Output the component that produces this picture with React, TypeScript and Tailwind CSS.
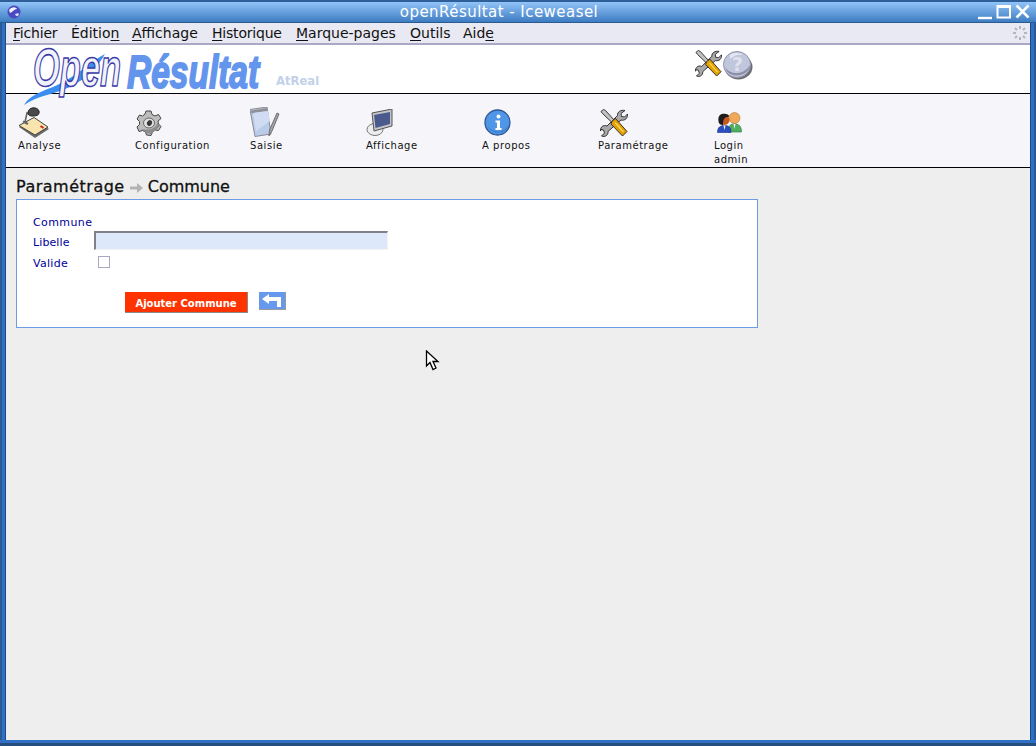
import type { ReactNode } from 'react';

function ToolsIcon({ size = 28 }: { size?: number }) {
  return (
    <svg width={size} height={size} viewBox="0 0 28 28">
      {/* wrench */}
      <path
        d="M25 1.5 L21 4.5 L21.5 7.5 L24.5 8 L27.5 5 C28 9 25 12 21 11 L8 22.5 C8.5 26 5 28.5 1.5 27 L4.5 24 L3.5 21 L1 20.5 L0.5 22 C0 18 3.5 15.5 7 17 L17.5 6.5 C17 3 21 0.5 25 1.5 Z"
        fill="#a9a9a9"
        stroke="#222"
        strokeWidth="0.9"
      />
      {/* screwdriver shaft */}
      <path d="M1 2.5 L3.5 0.5 L5.5 1.5 L15 12 L12.5 14 L2.5 4.5 Z" fill="#c2c2c2" stroke="#222" strokeWidth="0.9" />
      {/* handle */}
      <path d="M12 12 L15.5 9.5 L27 22.5 L22.5 27 L11 15 Z" fill="#e3a000" stroke="#222" strokeWidth="0.9" />
      <path d="M15 13.5 L23.5 23" stroke="#ffd860" strokeWidth="1.2" />
    </svg>
  );
}

function HelpIcon() {
  return (
    <svg width="31" height="31" viewBox="0 0 31 31">
      <ellipse cx="16.5" cy="17" rx="14" ry="12.5" fill="#4a4a50" opacity="0.8" />
      <ellipse cx="15" cy="14.5" rx="13.5" ry="13" fill="#c0c6dc" stroke="#9095ad" />
      <path d="M3 17 C8 25 21 26 28 15 C27 27 6 30 3 17 Z" fill="#8b8fa6" />
      <path d="M8 5 C12 2 19 3 21 5 C17 4 12 5 8 9 Z" fill="#e4e7f2" />
      <text x="15.5" y="20.5" textAnchor="middle" fontSize="19" fontWeight="700" fill="#dfe2ee" fontFamily="DejaVu Sans">?</text>
    </svg>
  );
}

function AnalyseIcon() {
  return (
    <svg width="32" height="31" viewBox="0 0 32 31">
      <path d="M1 20 L16 12 L31 22 L17 31 Z" fill="#6a6a6a" />
      <path d="M1 18.5 L16 10.5 L30 20 L17 28 Z" fill="#f8e4ac" stroke="#444" />
      <path d="M22.5 19 L25.5 21" stroke="#c22" strokeWidth="2" />
      <path d="M7 15 L9 6 L13 8" stroke="#666" strokeWidth="1.6" fill="none" />
      <path d="M10 6 C10 0 19 -1 21 4 C22 9 17 9 14 9 C12 9 10 8 10 6 Z" fill="#4a4a4a" stroke="#222" />
      <path d="M5 14.5 L10 17" stroke="#666" strokeWidth="2" />
    </svg>
  );
}

function GearIcon() {
  return (
    <svg width="26" height="26" viewBox="0 0 26 26">
      <path
        d="M10 1 L15 1 L16 4.5 L19 6 L22.5 4.5 L25 8.5 L22 11 L22.5 14 L25 16.5 L22.5 20.5 L19 20 L16.5 22 L15 25.5 L10.5 25 L9.5 22 L6.5 20.5 L3 21.5 L1 17 L3.5 14.5 L3.5 11.5 L1 9 L3.5 5 L6.5 6 L9 4 Z"
        fill="#bdbdbd"
        stroke="#444"
      />
      <path d="M4 18 L7 20 L10 23 L15 24 L21 19 L24 16 L21 13 C20 20 9 21 4 18 Z" fill="#8c8c8c" />
      <ellipse cx="13" cy="13" rx="5.5" ry="5" fill="#e2e2e2" stroke="#666" />
      <ellipse cx="13.5" cy="13" rx="2.4" ry="2.9" fill="#3a3a3a" transform="rotate(35 13.5 13)" />
    </svg>
  );
}

function SaisieIcon() {
  return (
    <svg width="30" height="30" viewBox="0 0 30 30">
      <path d="M0 2.5 L17 0 L21 27 L5 29.5 Z" fill="#b9cdea" stroke="#8a8a96" />
      <path d="M1 3.5 L17 1 L17.5 4 L1.5 6.5 Z" fill="#8f8f96" />
      <path d="M3 6 L18 4 L20 14 L6 24 Z" fill="#cfdcf2" />
      <path d="M29 7 L22 24 L19 29 L19.5 23 L27 6 Z" fill="#a2a2a8" stroke="#6f6f75" />
    </svg>
  );
}

function ScreenIcon() {
  return (
    <svg width="28" height="27" viewBox="0 0 28 27">
      <ellipse cx="9" cy="20.5" rx="8" ry="6" fill="#ececec" stroke="#777" />
      <path d="M6 4 L26 0 L26 17 L8 22 Z" fill="#c4c4c8" stroke="#555" />
      <path d="M8 6 L24 3 L24 15 L9.5 19 Z" fill="#4a5a8c" />
    </svg>
  );
}

function InfoIcon() {
  return (
    <svg width="27" height="27" viewBox="0 0 27 27">
      <circle cx="13.5" cy="13.5" r="12.5" fill="#4f97e6" stroke="#2a5494" strokeWidth="1.3" />
      <path d="M3 14 C5 24 20 27 25 15 C23 25 6 28 3 14 Z" fill="#2f6ab8" />
      <circle cx="14.5" cy="7.5" r="2" fill="#fff" />
      <path d="M11.5 11.5 H16 V19 H17.5 V21 H11.5 V19 H13 V13.5 H11.5 Z" fill="#fff" />
    </svg>
  );
}

function LoginIcon() {
  return (
    <svg width="25" height="21" viewBox="0 0 25 21">
      <circle cx="17.5" cy="6" r="5.5" fill="#f0a85a" stroke="#b97a30" strokeWidth="0.6" />
      <path d="M11 20 C11 13 14 12 17.5 12 C21 12 24.5 13 24.5 20 Z" fill="#4fb060" stroke="#2d7a3c" strokeWidth="0.6" />
      <path d="M16.5 12 L18.5 12 L17.5 17 Z" fill="#fff" />
      <circle cx="7.5" cy="8" r="5" fill="#c8581e" />
      <path d="M1.5 9 C0.5 2 6 1 9 2 C12 2 13 5 11 5 C8 5 6 6 6 13 C4 13 1.5 12 1.5 9 Z" fill="#1c1c1c" />
      <path d="M0.5 20.5 C0.5 15 3.5 13.5 7.5 13.5 C11.5 13.5 14 15 14 20.5 Z" fill="#2a4ec0" stroke="#1b2f80" strokeWidth="0.6" />
      <path d="M6.5 13.5 L8.5 13.5 L7.5 18 Z" fill="#fff" />
    </svg>
  );
}

function Logo() {
  return (
    <svg width="300" height="62" viewBox="0 0 300 62" className="absolute left-[20px] top-[45px]">
      <path d="M4 60 C12 47 30 45 45 36 C60 28 72 16 85 9 C78 22 66 34 50 42 C36 49 18 50 4 60 Z" fill="#3a8ef0" />
      {/* condensed look: small font stretched upward */}
      <text
        transform="translate(13 41) scale(1 1.55)"
        fontFamily="Liberation Sans"
        fontWeight="700"
        fontStyle="italic"
        fontSize="34.5"
        fill="#f1f3fb"
        stroke="#3a3aa8"
        strokeWidth="1"
      >
        Open
      </text>
      <text
        transform="translate(107 43) scale(1 1.4)"
        fontFamily="Liberation Sans"
        fontWeight="700"
        fontStyle="italic"
        fontSize="33.5"
        fill="#6495ed"
        stroke="#6495ed"
        strokeWidth="1.3"
      >
        Résultat
      </text>
      <text x="256" y="39.5" fontFamily="DejaVu Sans" fontWeight="700" fontSize="11.6" fill="#c2d0ea">
        AtReal
      </text>
    </svg>
  );
}

function MenuItem({ before = '', mark, after = '', className }: { before?: string; mark: string; after?: string; className: string }) {
  return (
    <span className={className}>
      {before}
      <span className="underline underline-offset-2">{mark}</span>
      {after}
    </span>
  );
}

function NavItem({ icon, label, className }: { icon: ReactNode; label: ReactNode; className: string }) {
  return (
    <div className={`flex flex-col ${className}`}>
      <div className="flex h-[37px] items-end">{icon}</div>
      <div className="mt-[1px] text-[10px] leading-[14px] tracking-[0.55px] text-[#111]">{label}</div>
    </div>
  );
}

export default function App() {
  return (
    <div className="relative flex h-[746px] w-[1036px] flex-col overflow-hidden bg-[#2f70c4] [font-family:'DejaVu_Sans',sans-serif]">
      {/* title bar */}
      <div className="relative flex h-[23px] shrink-0 items-center justify-center border-t-2 border-b border-t-[#2f5f98] border-b-[#2a5a90] bg-gradient-to-b from-[#92c4f8] to-[#3d7cc2] pr-[38px]">
        <span className="text-[15px] tracking-[0.45px] text-white">openRésultat - Iceweasel</span>
        <svg width="14" height="14" viewBox="0 0 14 14" className="absolute left-[7px] top-[3px]">
          <circle cx="7" cy="7" r="6.5" fill="#4a4ac0" />
          <path d="M2 5 C5 1 9 2 10 4 C7 4 6 7 3 8 Z" fill="#f0f0ff" />
          <path d="M8 9 C10 8 12 8 12 9 C11 12 9 12 8 9 Z" fill="#d8d8fc" />
        </svg>
        <svg width="54" height="18" viewBox="0 0 54 18" className="absolute right-[4px] top-[1px]" fill="none">
          <path d="M0 15 H14" stroke="#fff" strokeWidth="2.4" />
          <rect x="19.5" y="3" width="12.5" height="11.5" stroke="#fff" strokeWidth="2" />
          <path d="M19 3.5 H33" stroke="#fff" strokeWidth="3" />
          <path d="M38.5 2.5 L50.5 14.5 M50.5 2.5 L38.5 14.5" stroke="#fff" strokeWidth="2.6" />
        </svg>
      </div>

      {/* window frame around the page */}
      <div className="flex min-h-0 flex-1 border-x-2 border-[#2a5a96] px-[3px]">
        <div className="flex min-w-0 flex-1 flex-col border-x border-[#1d4a85] bg-[#eeeeee]">
          <div className="flex h-[22px] shrink-0 items-center justify-between border-b-2 border-[#a9a9c6] bg-[#e9e9f3] text-[14px] text-[#111]">
            <div className="flex h-full items-center pl-[7px]">
              <MenuItem mark="F" after="ichier" className="w-[58px] tracking-[-0.2px]" />
              <MenuItem before="Éditio" mark="n" className="w-[61px]" />
              <MenuItem mark="A" after="ffichage" className="w-[80px]" />
              <MenuItem mark="H" after="istorique" className="w-[84px] tracking-[-0.2px]" />
              <MenuItem mark="M" after="arque-pages" className="w-[114px]" />
              <MenuItem mark="O" after="utils" className="w-[53px]" />
              <MenuItem before="Aid" mark="e" className="w-[40px]" />
            </div>
            <svg width="16" height="16" viewBox="0 0 16 16" className="mr-[2px]">
              <path d="M8 1 V4 M8 12 V15 M1 8 H4 M12 8 H15 M3 3 L5 5 M11 11 L13 13 M13 3 L11 5 M3 13 L5 11" stroke="#b4b4bc" strokeWidth="2" />
            </svg>
          </div>

          <div className="flex h-[48px] shrink-0 items-start bg-white pl-[689px] pt-[5px]">
            <ToolsIcon size={27} />
            <HelpIcon />
          </div>

          <div className="flex h-[75px] shrink-0 border-y border-black bg-[#f6f6fa] pl-[12px] pt-[7px]">
            <NavItem className="w-[117px]" icon={<AnalyseIcon />} label="Analyse" />
            <NavItem
              className="w-[115px]"
              icon={
                <div className="mb-[2px] ml-[1px]">
                  <GearIcon />
                </div>
              }
              label="Configuration"
            />
            <NavItem
              className="w-[116px]"
              icon={
                <div className="mb-[1px]">
                  <SaisieIcon />
                </div>
              }
              label="Saisie"
            />
            <NavItem
              className="w-[116px]"
              icon={
                <div className="mb-[2px]">
                  <ScreenIcon />
                </div>
              }
              label="Affichage"
            />
            <NavItem
              className="w-[116px]"
              icon={
                <div className="mb-[2px] ml-[2px]">
                  <InfoIcon />
                </div>
              }
              label="A propos"
            />
            <NavItem
              className="w-[116px]"
              icon={
                <div className="mb-[1px] ml-[2px]">
                  <ToolsIcon />
                </div>
              }
              label="Paramétrage"
            />
            <NavItem
              className="w-[60px]"
              icon={
                <div className="mb-[5px] ml-[3px]">
                  <LoginIcon />
                </div>
              }
              label={
                <>
                  Login
                  <br />
                  admin
                </>
              }
            />
          </div>

          <div className="flex h-[31px] shrink-0 items-center pl-[10px] pt-[6px] text-[16px] text-[#111] [-webkit-text-stroke:0.3px_#111]">
            <span className="tracking-[0.5px]">Paramétrage</span>
            <svg width="14" height="10" viewBox="0 0 14 10" className="mx-[5px] mt-[3px]">
              <path d="M0 3.5 H7 V0 L13 5 L7 10 V6.5 H0 Z" fill="#b3b3b3" />
            </svg>
            <span className="-ml-[1px]">Commune</span>
          </div>

          <div className="ml-[10px] h-[129px] w-[742px] border border-[#6f9ae6] bg-white pl-[16px] pt-[15px] text-[11px] tracking-[0.4px] text-[#000099]">
            <div className="h-[16px] leading-[16px]">Commune</div>
            <div className="flex h-[20px] items-start">
              <span className="w-[61px] pt-[4px] leading-[16px] tracking-[0.1px]">Libelle</span>
              <div className="h-[19px] w-[294px] border-t-2 border-l-2 border-r border-b border-t-[#808088] border-l-[#808088] border-r-[#f2f2f2] border-b-[#f2f2f2] bg-[#dde8fb]" />
            </div>
            <div className="mt-[1px] flex h-[20px] items-center">
              <span className="w-[65px] pt-[4px] tracking-[0.3px]">Valide</span>
              <div className="h-[12px] w-[12px] border border-[#a8a8c4] bg-white" />
            </div>
            <div className="mt-[20px] flex items-start pl-[92px]">
              <div className="flex h-[21px] w-[123px] items-center justify-center border-r border-b border-r-[#8a8a8a] border-b-[#8a8a8a] bg-[#ff3300] pt-[2px] text-[10px] font-bold tracking-normal text-white">
                Ajouter Commune
              </div>
              <div className="ml-[11px] flex h-[18px] w-[27px] items-center justify-center border-r border-b border-r-[#9a9a9a] border-b-[#9a9a9a] bg-[#6699ee]">
                <svg width="20" height="13" viewBox="0 0 20 13">
                  <path d="M0 5 L7 0 V3 H19 V13 H15 V7 H7 V10 Z" fill="#fff" />
                </svg>
              </div>
            </div>
          </div>
        </div>
      </div>
      <div className="h-[3px] shrink-0" />
      <div className="h-[3px] shrink-0 bg-[#264f80]" />

      <Logo />

      {/* mouse pointer */}
      <svg width="16" height="22" viewBox="0 0 16 22" className="absolute left-[425px] top-[350px]">
        <path d="M1.5 1 V16 L5 12.5 L8 19.5 L11 18 L8 11.5 L13 11.5 Z" fill="#fff" stroke="#000" strokeWidth="1.3" />
      </svg>
    </div>
  );
}
